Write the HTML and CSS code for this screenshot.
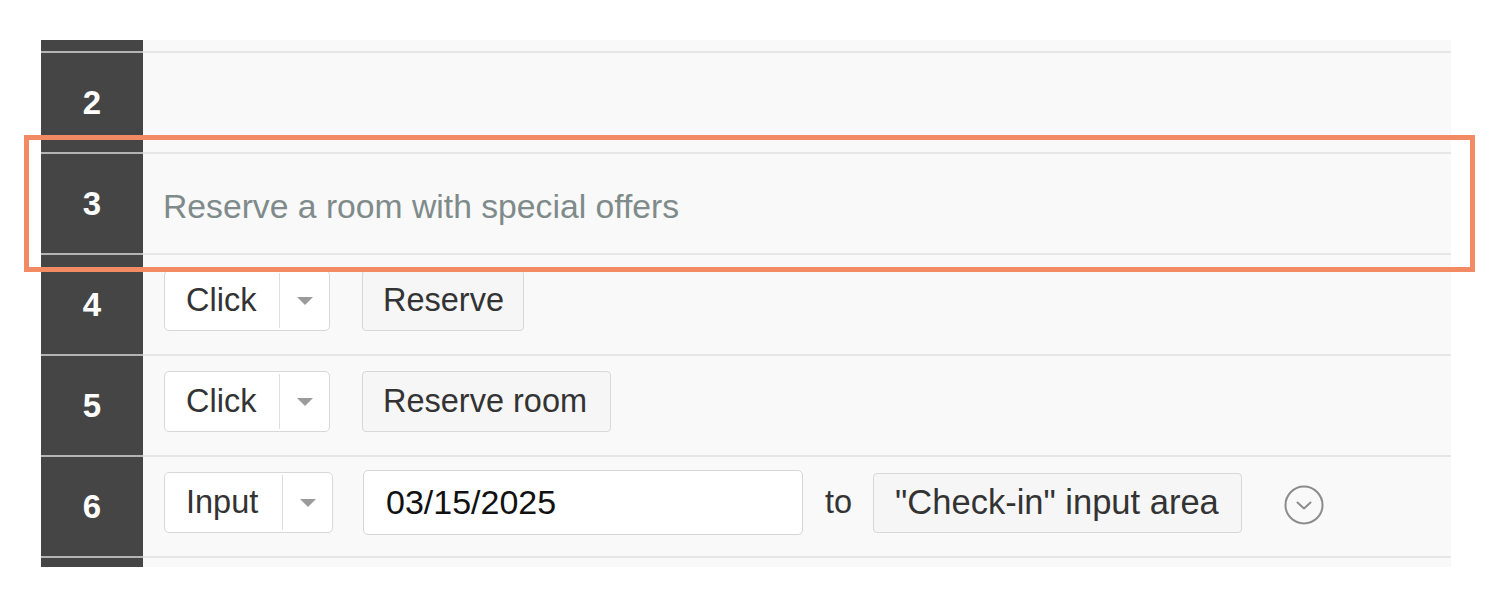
FILE: index.html
```html
<!DOCTYPE html>
<html lang="en">
<head>
<meta charset="utf-8">
<title>Steps</title>
<link rel="stylesheet" href="styles.css">
</head>
<body>
<div class="sheet">
  <div class="row row-tail">
    <div class="num"></div>
    <div class="body"></div>
  </div>
  <div class="row">
    <div class="num">2</div>
    <div class="body"></div>
  </div>
  <div class="row row-highlight">
    <div class="num">3</div>
    <div class="body body-desc"><span class="desc">Reserve a room with special offers</span></div>
    <div class="highlight"></div>
  </div>
  <div class="row">
    <div class="num">4</div>
    <div class="body">
      <div class="select"><span class="select-label">Click</span><span class="select-arrow"><span class="tri"></span></span></div>
      <div class="target t-reserve">Reserve</div>
    </div>
  </div>
  <div class="row">
    <div class="num">5</div>
    <div class="body">
      <div class="select"><span class="select-label">Click</span><span class="select-arrow"><span class="tri"></span></span></div>
      <div class="target t-room">Reserve room</div>
    </div>
  </div>
  <div class="row">
    <div class="num">6</div>
    <div class="body">
      <div class="select select-wide"><span class="select-label">Input</span><span class="select-arrow"><span class="tri"></span></span></div>
      <div class="field">03/15/2025</div>
      <span class="to">to</span>
      <div class="target t-check">"Check-in" input area</div>
      <svg class="more" width="40" height="40" viewBox="0 0 40 40" aria-hidden="true">
        <circle cx="20" cy="20" r="18.5" fill="none" stroke="#8c8c8c" stroke-width="2"/>
        <polyline points="13.5,17.5 20,23.5 26.5,17.5" fill="none" stroke="#8c8c8c" stroke-width="2" stroke-linecap="round" stroke-linejoin="round"/>
      </svg>
    </div>
  </div>
  <div class="row row-tail">
    <div class="num"></div>
    <div class="body"></div>
  </div>
</div>
</body>
</html>
```

FILE: styles.css
```css
* { box-sizing: border-box; }

html, body {
  margin: 0;
  padding: 0;
  background: #ffffff;
}

body {
  font-family: "Liberation Sans", Arial, sans-serif;
  color: #333333;
  width: 1500px;
  height: 613px;
  overflow: hidden;
}

.sheet {
  margin: 40px 0 0 41px;
  width: 1410px;
  display: flex;
  flex-direction: column;
}

.row {
  display: grid;
  grid-template-columns: 102px 1fr;
  height: 101px;
}

.row-tail {
  height: 11px;
}

.row + .row .num {
  border-top: 2px solid #b4b4b4;
}

.row + .row .body {
  border-top: 2px solid #e6e6e6;
}

.num {
  background: #454545;
  color: #ffffff;
  font-weight: 700;
  font-size: 33px;
  display: flex;
  align-items: center;
  justify-content: center;
}

.body {
  background: #f9f9f9;
  display: flex;
  align-items: center;
  padding: 0 0 8px 21px;
}

.body-desc {
  padding: 6px 0 0 20px;
}

.desc {
  font-size: 33.7px;
  color: #7f8b8b;
}

.row-highlight {
  position: relative;
}

.highlight {
  position: absolute;
  top: -17px;
  left: -17px;
  right: -24px;
  bottom: -19px;
  border: 5px solid #f28a64;
  z-index: 2;
  pointer-events: none;
}

.select {
  display: flex;
  height: 61px;
  width: 166px;
  background: #ffffff;
  border: 1.5px solid #d8d8d8;
  border-radius: 5px;
  font-size: 32.5px;
  color: #333333;
}

.select-wide {
  width: 169px;
}

.select-label {
  flex: 1;
  display: flex;
  align-items: center;
  padding-left: 21px;
  border-right: 1.5px solid #dedede;
  margin: 2px 0;
}

.select-arrow {
  width: 49px;
  display: flex;
  align-items: center;
  justify-content: center;
}

.tri {
  width: 0;
  height: 0;
  border-left: 8px solid transparent;
  border-right: 8px solid transparent;
  border-top: 8px solid #9b9b9b;
}

.target {
  height: 61px;
  display: flex;
  align-items: center;
  padding-left: 20px;
  background: #f6f6f6;
  border: 1.5px solid #d8d8d8;
  border-radius: 4px;
  font-size: 32.5px;
  color: #333333;
  margin-left: 32px;
}

.t-reserve { width: 162px; }
.t-room { width: 249px; }

.t-check {
  width: 369px;
  height: 60px;
  margin-left: 21px;
  padding-left: 21px;
  font-size: 34.5px;
}

.field {
  margin-left: 30px;
  width: 440px;
  height: 65px;
  display: flex;
  align-items: center;
  padding-left: 22px;
  background: #ffffff;
  border: 1.5px solid #d6d6d6;
  border-radius: 5px;
  font-size: 34px;
  color: #111111;
}

.to {
  margin-left: 22px;
  font-size: 32.5px;
  color: #333333;
}

.more {
  margin-left: 42px;
  margin-top: 4px;
}
```
